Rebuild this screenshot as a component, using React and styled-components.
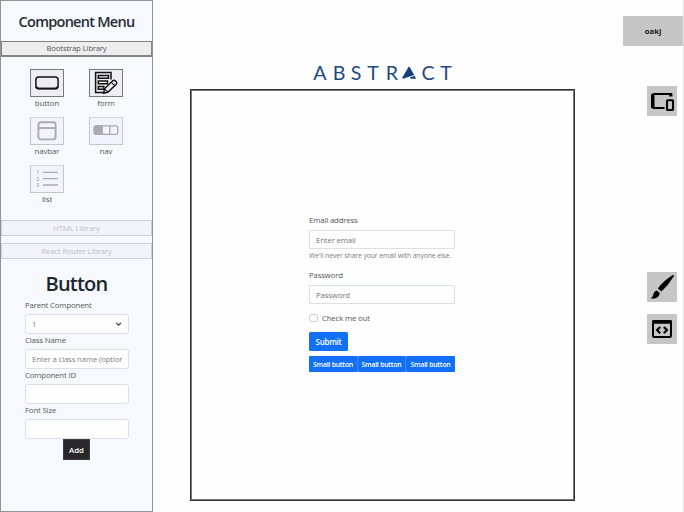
import React from "react";
import styled, { createGlobalStyle } from "styled-components";

const GlobalStyle = createGlobalStyle`
  * { box-sizing: border-box; }
  body {
    margin: 0;
    background: #fdfefd;
    color: #212529;
    font-family: "Open Sans", "Noto Sans", sans-serif;
    overflow: hidden;
  }
  button, input { font-family: inherit; margin: 0; }
`;

const Page = styled.div`
  display: flex;
  width: 684px;
  height: 512px;
  border-right: 1px solid #e3e3e5;
`;

const Sidebar = styled.aside`
  width: 153px;
  height: 512px;
  flex: none;
  display: flex;
  flex-direction: column;
  background: #f6fafe;
  border: 1px solid #8f9298;
`;

const Text = styled.span`
  display: block;
  white-space: nowrap;
  font-size: ${(p) => p.$size || 7.8}px;
  line-height: ${(p) => p.$line || 10}px;
  letter-spacing: ${(p) => p.$track ?? -0.16}px;
  color: ${(p) => p.$color || "#53575d"};
`;

const MenuTitle = styled.h1`
  margin: 11px 0 9px;
  height: 20px;
  line-height: 20px;
  font-size: 14.5px;
  font-weight: 600;
  letter-spacing: -0.74px;
  text-align: center;
  white-space: nowrap;
  color: #262c34;
`;

const LibraryButton = styled.button`
  display: block;
  flex: none;
  width: 100%;
  height: 16px;
  padding: 0;
  line-height: 13px;
  font-size: 7.8px;
  letter-spacing: ${(p) => p.$track}px;
  margin-bottom: ${(p) => p.$gap || 0}px;
  color: ${(p) => (p.$faded ? "#bcc0c6" : "#55585c")};
  background: ${(p) => (p.$faded ? "#f1f4fb" : "#eeedee")};
  border: ${(p) => (p.$faded ? "1px solid #cdd0d7" : "2px solid #838487")};
  border-width: ${(p) => (p.$faded ? "1px" : "1px 1px 2px")};
`;

const TileGrid = styled.div`
  display: grid;
  grid-template-columns: 34px 34px;
  column-gap: 25px;
  grid-auto-rows: 48px;
  margin: 12px 0 0 29px;
  height: 151px;
`;

const Tile = styled.div`
  display: flex;
  flex-direction: column;
  align-items: center;
`;

const TileIcon = styled.div`
  display: flex;
  align-items: center;
  justify-content: center;
  width: 34px;
  height: 28px;
  margin-bottom: 1px;
  color: ${(p) => (p.$faded ? "#a9abb0" : "#101113")};
  background: ${(p) => (p.$faded ? "#f1f4fc" : "#eeeef0")};
  border: 1px solid ${(p) => (p.$faded ? "#c3c6cd" : "#77797d")};
  border-top-color: ${(p) => (p.$faded ? "#d5d8df" : "#77797d")};
`;

const PanelTitle = styled.h2`
  margin: 14px 0 5px;
  height: 22px;
  line-height: 22px;
  font-size: 20px;
  font-weight: 600;
  letter-spacing: -0.8px;
  text-align: center;
  color: #20262d;
`;

const PanelForm = styled.div`
  display: flex;
  flex-direction: column;
  width: 104px;
  margin-left: 24px;
`;

const Field = styled.div`
  height: 35px;
  display: flex;
  flex-direction: column;
  gap: 4px;
`;

const Control = styled.div`
  display: flex;
  flex: none;
  align-items: center;
  justify-content: space-between;
  height: ${(p) => p.$h || 20}px;
  padding: 0 6px;
  overflow: hidden;
  background: #fefefe;
  border: 1px solid #dbdfe8;
  border-radius: ${(p) => (p.$square ? 1 : 2.5)}px;
`;

const Clip = styled.div`
  overflow: hidden;
`;

const AddButton = styled.button`
  align-self: center;
  width: 27px;
  height: 21px;
  margin-top: -1px;
  margin-right: 1px;
  padding: 0;
  font-size: 7.8px;
  font-weight: 600;
  color: #fff;
  background: #29272a;
  border: 1px solid #3f3f42;
`;

const Main = styled.main`
  width: 422px;
  flex: none;
  padding: 62px 0 0 37px;
`;

const LogoRow = styled.div`
  display: flex;
  align-items: center;
  height: 21px;
  padding-left: 120px;
  margin-bottom: 6px;
`;

const LogoLetter = styled.span`
  width: ${(p) => p.$w}px;
  text-align: center;
  font: 400 19.6px/21px "Lato", sans-serif;
  color: #1e4a84;
`;

const Canvas = styled.section`
  display: flex;
  flex-direction: column;
  width: 385px;
  height: 412px;
  padding: 125px 0 0 118px;
  border: 1px solid #303135;
  outline: 1px solid #77787c;
  outline-offset: -2px;
`;

const FormColumn = styled.div`
  display: flex;
  flex-direction: column;
  width: 146px;
`;

const Group = styled.div`
  display: flex;
  flex-direction: column;
  gap: ${(p) => p.$gap || 5}px;
  height: ${(p) => p.$h}px;
`;

const CheckRow = styled.div`
  display: flex;
  align-items: center;
  gap: 4px;
  height: 10px;
  margin-bottom: 9px;
`;

const CheckBox = styled.span`
  width: 9px;
  height: 8px;
  border: 1px solid #d0d2d6;
  border-radius: 2px;
`;

const SubmitButton = styled.button`
  width: 39px;
  height: 19px;
  padding: 0;
  font-size: 8px;
  font-weight: 600;
  letter-spacing: -0.25px;
  color: #fff;
  background: #1270f5;
  border: 0;
  border-radius: 1.5px;
  margin-bottom: 5px;
`;

const ButtonStrip = styled.div`
  display: grid;
  grid-template-columns: 49px 48px 49px;
`;

const SmallButton = styled.button`
  height: 16px;
  padding: 0;
  font-size: 6.9px;
  font-weight: 600;
  letter-spacing: -0.22px;
  white-space: nowrap;
  color: #fff;
  background: #1270f5;
  border: 0;
  border-right: ${(p) => (p.$last ? 0 : 1)}px solid #3c8af8;
  border-radius: 1px;
`;

const Tools = styled.aside`
  flex: 1;
  display: flex;
  flex-direction: column;
  align-items: flex-end;
  padding-top: 16px;
`;

const UserBadge = styled.div`
  width: 60px;
  height: 30px;
  line-height: 30px;
  text-align: center;
  font-size: 7.8px;
  font-weight: 700;
  letter-spacing: -0.1px;
  color: #1d1d1f;
  background: #c6c6c6;
  margin-bottom: 40px;
`;

const ToolButton = styled.div`
  display: flex;
  align-items: center;
  justify-content: center;
  width: 30px;
  height: 30px;
  margin: 0 6px ${(p) => p.$gap || 0}px 0;
  color: #000;
  background: #c6c6c6;
`;

const ButtonIcon = () => (
  <svg width="24" height="14" viewBox="0 0 24 14" fill="none" stroke="currentColor">
    <rect x="0.9" y="1" width="22.2" height="11.6" rx="2.8" strokeWidth="1.5" />
    <path d="M1.2 10.4Q1.8 12.7 4 12.7H20Q22.2 12.7 22.8 10.4" strokeWidth="1.8" />
  </svg>
);

const FormIcon = () => (
  <svg width="24" height="24" viewBox="0 0 24 24" fill="none" stroke="currentColor" strokeWidth="1.5">
    <path d="M17 8.5V1.6H1.6V21.6H9.5" />
    <path d="M4.3 4.4H14.5V7.2H4.3ZM4.3 10H13.5V12.7H4.3ZM4.3 15.6H9.8V18.3H4.3Z" />
    <path d="M9.7 22.2L10.5 17.8L18.7 9.8Q20 8.7 21.5 10.1Q23.6 11.7 22.3 13.2L14.1 21.1Z" fill="#eeeef0" strokeWidth="1.4" />
    <path d="M17.3 11.3L20.8 14.6M10.5 17.8L14.1 21.1" strokeWidth="1.1" />
  </svg>
);

const NavbarIcon = () => (
  <svg width="20" height="20" viewBox="0 0 20 20" fill="none" stroke="currentColor" strokeWidth="1.9">
    <rect x="1.4" y="1.2" width="17.2" height="17.2" rx="2.5" />
    <path d="M1.4 7H18.6" />
  </svg>
);

const NavIcon = () => (
  <svg width="26" height="24" viewBox="0 0 26 24" fill="none" stroke="currentColor" strokeWidth="1.3">
    <rect x="1.2" y="6.9" width="23.6" height="8.4" rx="2" />
    <path d="M3.2 6.9H9.2V15.3H3.2Q1.2 15.3 1.2 13.3V8.9Q1.2 6.9 3.2 6.9Z" fill="currentColor" />
    <path d="M16.8 6.9V15.3" />
  </svg>
);

const ListIcon = () => (
  <svg width="24" height="20" viewBox="0 0 24 20" fill="none" stroke="currentColor">
    <path d="M8 3.4H23M8 9.7H23M8 16H23" strokeWidth="1.3" />
    <g fill="currentColor" stroke="none" fontSize="4.5" fontWeight="700" fontFamily="Open Sans">
      <text x="1.5" y="5.3">1</text>
      <text x="1.5" y="11.6">2</text>
      <text x="1.5" y="17.9">3</text>
    </g>
  </svg>
);

const DevicesIcon = () => (
  <svg width="30" height="30" viewBox="0 0 30 30" fill="none" stroke="#000">
    <path d="M25 8H7.5Q5 8 5 10.2V20Q5 22 7 22H17.5" strokeWidth="2" />
    <path d="M5.9 8.5V22M23.8 7.2V10.5" strokeWidth="3.2" />
    <rect x="20" y="14.2" width="6" height="9.8" rx="0.6" strokeWidth="2.1" />
  </svg>
);

const BrushIcon = () => (
  <svg width="30" height="30" viewBox="0 0 30 30" fill="#000">
    <path d="M26.3 2.8Q27.3 3.4 26.6 4.6Q21.4 13.4 14.4 19.6L10.8 16.4Q16.5 8.7 26.3 2.8Z" />
    <path d="M9.8 18.4L12.8 21Q12.6 24.2 9.8 25.7Q7 27 3.6 26.3Q5.9 24.9 6.4 22.2Q7.3 18.8 9.8 18.4Z" />
  </svg>
);

const CodeIcon = () => (
  <svg width="30" height="30" viewBox="0 0 30 30" fill="none" stroke="#000" strokeWidth="2">
    <rect x="6" y="7" width="18" height="16" rx="1.2" />
    <path d="M6.5 6H23.5Q25 6 25 7.5V9.8H5V7.5Q5 6 6.5 6Z" fill="#000" stroke="none" />
    <path d="M13.2 12.9L10 16.1L13.2 19.3M16.8 12.9L20 16.1L16.8 19.3" strokeWidth="2.1" />
  </svg>
);

const Chevron = () => (
  <svg width="7" height="6" viewBox="0 0 7 6" fill="none" stroke="#343a40" strokeWidth="1.2">
    <path d="M1.2 1.8L3.6 4.2L6 1.8" />
  </svg>
);

const LogoMark = () => (
  <svg width="14" height="14" viewBox="0 0 14 14" fill="#153f7a">
    <path d="M6.2 1.4Q7 0.2 7.9 1.5L12.2 9L1 12.7Q0 12.4 0.5 11.2Z" />
    <path d="M12.6 9.8L14 12.8H9L7.6 11.4Z" />
  </svg>
);

const tiles = [
  { label: "button", icon: <ButtonIcon /> },
  { label: "form", icon: <FormIcon /> },
  { label: "navbar", icon: <NavbarIcon />, faded: true },
  { label: "nav", icon: <NavIcon />, faded: true },
  { label: "list", icon: <ListIcon />, faded: true },
];

export default function App() {
  return (
    <>
      <GlobalStyle />
      <Page>
        <Sidebar>
          <MenuTitle>Component Menu</MenuTitle>
          <LibraryButton $track={-0.2}>Bootstrap Library</LibraryButton>
          <TileGrid>
            {tiles.map((t) => (
              <Tile key={t.label}>
                <TileIcon $faded={t.faded}>{t.icon}</TileIcon>
                <Text $track={-0.05}>{t.label}</Text>
              </Tile>
            ))}
          </TileGrid>
          <LibraryButton $faded $gap={7} $track={-0.15}>HTML Library</LibraryButton>
          <LibraryButton $faded $track={-0.18}>React Router Library</LibraryButton>
          <PanelTitle>Button</PanelTitle>
          <PanelForm>
            <Field>
              <Text>Parent Component</Text>
              <Control><Text $color="#6c7f93">1</Text><Chevron /></Control>
            </Field>
            <Field>
              <Text>Class Name</Text>
              <Control><Clip><Text $color="#7e8288">Enter a class name (optional)</Text></Clip></Control>
            </Field>
            <Field>
              <Text>Component ID</Text>
              <Control />
            </Field>
            <Field>
              <Text>Font Size</Text>
              <Control />
            </Field>
            <AddButton>Add</AddButton>
          </PanelForm>
        </Sidebar>

        <Main>
          <LogoRow>
            <LogoLetter $w={20}>A</LogoLetter>
            <LogoLetter $w={18}>B</LogoLetter>
            <LogoLetter $w={16}>S</LogoLetter>
            <LogoLetter $w={18}>T</LogoLetter>
            <LogoLetter $w={20}>R</LogoLetter>
            <LogoMark />
            <LogoLetter $w={24}>C</LogoLetter>
            <LogoLetter $w={12}>T</LogoLetter>
          </LogoRow>
          <Canvas>
            <FormColumn>
              <Group $h={55}>
                <Text>Email address</Text>
                <Control $h={19} $square><Text $color="#777b80">Enter email</Text></Control>
                <Text $size={6.8} $line={3} $track={-0.09} $color="#7c8085">We'll never share your email with anyone else.</Text>
              </Group>
              <Group $h={43}>
                <Text>Password</Text>
                <Control $h={19} $square><Text $color="#777b80">Password</Text></Control>
              </Group>
              <CheckRow><CheckBox /><Text>Check me out</Text></CheckRow>
              <SubmitButton>Submit</SubmitButton>
              <ButtonStrip>
                <SmallButton>Small button</SmallButton>
                <SmallButton>Small button</SmallButton>
                <SmallButton $last>Small button</SmallButton>
              </ButtonStrip>
            </FormColumn>
          </Canvas>
        </Main>

        <Tools>
          <UserBadge>oakj</UserBadge>
          <ToolButton $gap={156}><DevicesIcon /></ToolButton>
          <ToolButton $gap={12}><BrushIcon /></ToolButton>
          <ToolButton><CodeIcon /></ToolButton>
        </Tools>
      </Page>
    </>
  );
}
